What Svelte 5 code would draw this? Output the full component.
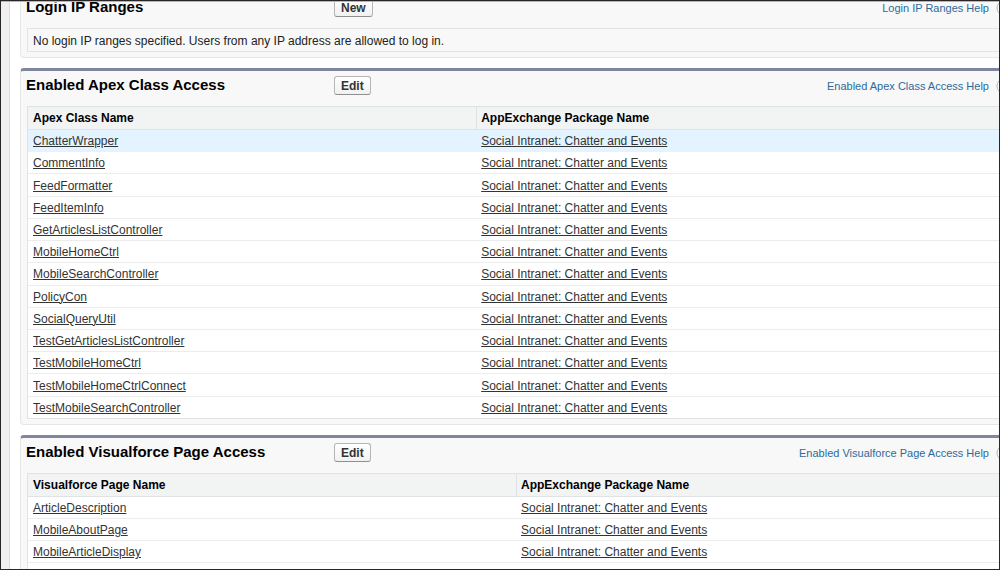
<script>
  const packageName = "Social Intranet: Chatter and Events";

  let sections = [
    {
      title: "Login IP Ranges",
      action: "New",
      message:
        "No login IP ranges specified. Users from any IP address are allowed to log in.",
    },
    {
      title: "Enabled Apex Class Access",
      action: "Edit",
      column: "Apex Class Name",
      width: 45,
      rows: [
        "ChatterWrapper",
        "CommentInfo",
        "FeedFormatter",
        "FeedItemInfo",
        "GetArticlesListController",
        "MobileHomeCtrl",
        "MobileSearchController",
        "PolicyCon",
        "SocialQueryUtil",
        "TestGetArticlesListController",
        "TestMobileHomeCtrl",
        "TestMobileHomeCtrlConnect",
        "TestMobileSearchController",
      ],
    },
    {
      title: "Enabled Visualforce Page Access",
      action: "Edit",
      column: "Visualforce Page Name",
      width: 49,
      rows: ["ArticleDescription", "MobileAboutPage", "MobileArticleDisplay"],
    },
  ];

  let highlighted = "ChatterWrapper";
</script>

<div class="window">
  <div class="rail"></div>
  <main>
    {#each sections as section}
      <section class="panel">
        <header>
          <h2>{section.title}</h2>
          <div><button type="button">{section.action}</button></div>
          <a class="help" href="#help">
            {section.title} Help
            <svg width="16" height="16" viewBox="0 0 16 16" aria-hidden="true">
              <circle cx="8" cy="8" r="7" fill="#fff" stroke="#b5b5b5" />
              <path
                d="M6 6.2a2 2 0 1 1 2.8 1.8q-.8.4-.8 1.4M8 11v1.4"
                fill="none"
                stroke="#888"
                stroke-width="1.4"
              />
            </svg>
          </a>
        </header>
        {#if section.message}
          <p class="message">{section.message}</p>
        {:else}
          <table class:long={section.rows.length > 10}>
            <thead>
              <tr>
                <th scope="col" style="width: {section.width}%">{section.column}</th>
                <th scope="col">AppExchange Package Name</th>
              </tr>
            </thead>
            <tbody>
              {#each section.rows as name}
                <tr class:highlight={name === highlighted}>
                  <td><a href="#{name}">{name}</a></td>
                  <td><a href="#package">{packageName}</a></td>
                </tr>
              {/each}
            </tbody>
          </table>
        {/if}
      </section>
    {/each}
  </main>
</div>

<style>
  :global(body) {
    background: #fff;
  }

  .window {
    display: flex;
    box-sizing: border-box;
    height: 100vh;
    overflow: hidden;
    border: 1px solid #2a2628;
    box-shadow: inset 0 1px 0 #b9b5b7;
    font-family: "Liberation Sans", Arial, sans-serif;
    font-size: 12px;
    color: #222;
  }

  .rail {
    flex: none;
    width: 8px;
    margin-top: 1px;
    background: #f1f0f1;
    border-right: 1px solid #dcdcdc;
  }

  /* the page is wider than the window and scrolled down a little */
  main {
    flex: 1 0 auto;
    width: calc(100% + 24px);
    box-sizing: border-box;
    margin-top: -11px;
    padding-left: 10px;
    clip-path: inset(12px 0 0 0);
  }

  .panel {
    margin-bottom: 10px;
    padding: 0 6px 5px;
    background: #f8f8f8;
    border: 1px solid #e6e6e6;
    border-top: 3px solid #8186a0;
    border-radius: 4px;
  }

  header {
    display: grid;
    grid-template-columns: 307px auto 1fr;
    align-items: center;
    box-sizing: border-box;
    height: 35px;
    padding: 0 13px 6px 0;
  }

  h2 {
    margin: 0 0 2px -1px;
    font-size: 15px;
    line-height: 18px;
    color: #000;
  }

  button {
    display: block;
    height: 19px;
    padding: 0 6px;
    border: 1px solid #b5b5b5;
    border-bottom-color: #8f8f8f;
    border-radius: 3px;
    background: linear-gradient(#fff, #f1f1f1);
    font: bold 12px/16px "Liberation Sans", Arial, sans-serif;
    color: #333;
    cursor: pointer;
  }

  .help {
    display: flex;
    justify-content: flex-end;
    align-items: center;
    gap: 7px;
    font-size: 11px;
    color: #2d6a9a;
    text-decoration: none;
  }

  .message {
    margin: 0;
    padding: 4px 5px 2px;
    border: 1px solid #e3e3e3;
    line-height: 16px;
  }

  table {
    width: 100%;
    border: 1px solid #e0e3e5;
    border-spacing: 0;
    background: #fff;
  }

  .long {
    height: 313px;
  }

  th,
  td {
    padding: 3px 5px 2px;
    border-bottom: 1px solid #ececec;
    line-height: 16px;
    text-align: left;
  }

  th {
    padding-bottom: 3px;
    background: #f2f3f3;
    border-color: #e0e3e5;
    color: #000;
  }

  th + th {
    padding-left: 4px;
    border-left: 1px solid #e0e3e5;
  }

  .long tbody tr:last-child td {
    border-bottom: 0;
  }

  .panel:last-child table {
    padding-bottom: 22px;
  }

  td a {
    color: #333;
  }

  .highlight td {
    background: #e3f3ff;
    border-color: #e3f3ff;
  }
</style>
